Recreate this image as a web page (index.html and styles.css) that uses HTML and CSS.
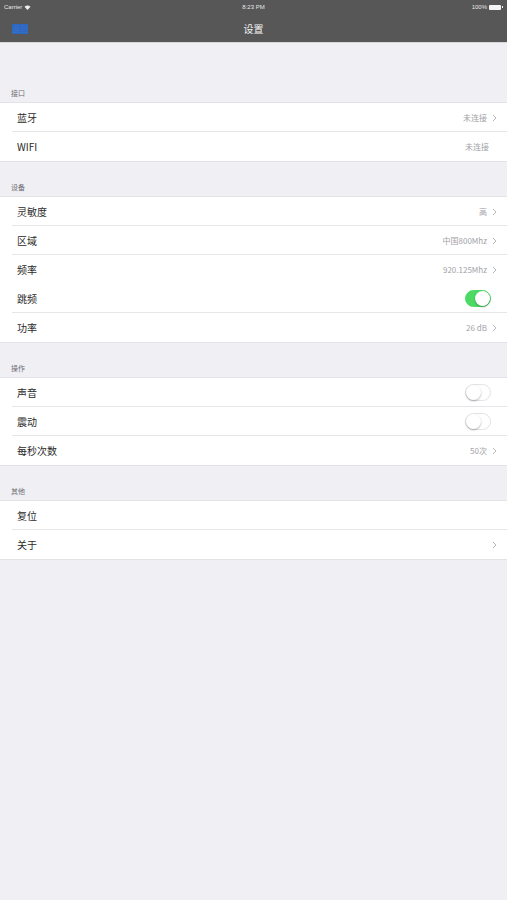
FILE: index.html
```html
<!DOCTYPE html>
<html lang="zh">
<head>
<meta charset="utf-8">
<title>设置</title>
<link rel="stylesheet" href="styles.css">
</head>
<body>
<div class="topbar">
  <div class="statusbar">
    <div class="sb-left">Carrier
      <svg class="wifi" width="7" height="5" viewBox="0 0 14 10"><path d="M7 10 L1 3.5 A9 9 0 0 1 13 3.5 Z" fill="#eee"/></svg>
    </div>
    <div class="sb-center">8:23 PM</div>
    <div class="sb-right">100% <span class="battery"></span></div>
  </div>
  <div class="navbar">
    <span class="back">返回</span>
    <span class="title">设置</span>
    <span class="nav-spacer"></span>
  </div>
</div>

<main class="content">
  <section class="group first">
    <div class="group-header">接口</div>
    <div class="card">
      <div class="row"><span class="label">蓝牙</span><span class="value">未连接<svg class="chev" viewBox="0 0 5 8"><path d="M1 1 L4 4 L1 7" /></svg></span></div>
      <div class="row"><span class="label">WIFI</span><span class="value plain">未连接</span></div>
    </div>
  </section>

  <section class="group">
    <div class="group-header">设备</div>
    <div class="card">
      <div class="row"><span class="label">灵敏度</span><span class="value">高<svg class="chev" viewBox="0 0 5 8"><path d="M1 1 L4 4 L1 7" /></svg></span></div>
      <div class="row"><span class="label">区域</span><span class="value">中国800Mhz<svg class="chev" viewBox="0 0 5 8"><path d="M1 1 L4 4 L1 7" /></svg></span></div>
      <div class="row nosep"><span class="label">频率</span><span class="value">920.125Mhz<svg class="chev" viewBox="0 0 5 8"><path d="M1 1 L4 4 L1 7" /></svg></span></div>
      <div class="row"><span class="label">跳频</span><span class="switch on"><span class="knob"></span></span></div>
      <div class="row"><span class="label">功率</span><span class="value">26 dB<svg class="chev" viewBox="0 0 5 8"><path d="M1 1 L4 4 L1 7" /></svg></span></div>
    </div>
  </section>

  <section class="group">
    <div class="group-header">操作</div>
    <div class="card">
      <div class="row"><span class="label">声音</span><span class="switch"><span class="knob"></span></span></div>
      <div class="row"><span class="label">震动</span><span class="switch"><span class="knob"></span></span></div>
      <div class="row"><span class="label">每秒次数</span><span class="value">50次<svg class="chev" viewBox="0 0 5 8"><path d="M1 1 L4 4 L1 7" /></svg></span></div>
    </div>
  </section>

  <section class="group">
    <div class="group-header">其他</div>
    <div class="card">
      <div class="row"><span class="label">复位</span></div>
      <div class="row"><span class="label">关于</span><span class="value"><svg class="chev" viewBox="0 0 5 8"><path d="M1 1 L4 4 L1 7" /></svg></span></div>
    </div>
  </section>
</main>
</body>
</html>
```
FILE: styles.css
```css
* { box-sizing: border-box; }
html, body { margin: 0; padding: 0; }
body {
  width: 507px;
  height: 900px;
  background: #efeff4;
  font-family: "Noto Sans CJK SC", "Liberation Sans", sans-serif;
  color: #2a2a2a;
  overflow: hidden;
}
.topbar {
  background: #575757;
  border-bottom: 1px solid #d8d8dc;
  height: 43px;
  display: flex;
  flex-direction: column;
}
.statusbar {
  height: 14px;
  display: flex;
  align-items: center;
  justify-content: space-between;
  padding: 0 4px;
  font-family: "Liberation Sans", sans-serif;
  font-size: 6px;
  color: #e8e8e8;
}
.sb-left, .sb-right { flex: 1; display: flex; align-items: center; gap: 2px; }
.sb-right { justify-content: flex-end; }
.sb-center { flex: 1; text-align: center; }
.wifi { display: block; }
.battery {
  width: 12px;
  height: 5px;
  background: #f4f4f4;
  border-radius: 1px;
  position: relative;
  margin-right: 2px;
}
.battery::after {
  content: "";
  position: absolute;
  right: -2px;
  top: 1.5px;
  width: 1px;
  height: 2px;
  background: #f4f4f4;
}
.navbar {
  flex: 1;
  display: flex;
  align-items: center;
  justify-content: space-between;
  padding: 1px 12px 0;
}
.back {
  width: 16px;
  height: 10px;
  background: #2c66bf;
  color: #3a74cc;
  font-size: 8px;
  line-height: 10px;
  text-align: center;
  overflow: hidden;
  display: block;
}
.nav-spacer { width: 16px; }
.title {
  color: #f2f2f2;
  font-size: 10px;
  line-height: 12px;
}
.content { padding-top: 23px; }
.group-header {
  height: 37px;
  display: flex;
  align-items: flex-end;
  padding: 0 0 6px 11px;
  font-size: 7px;
  line-height: 8px;
  color: #6d6d72;
}
.group:not(.first) .group-header { height: 36px; }
.card {
  background: #fff;
  box-shadow: 0 -1px 0 #e3e3e7, 0 1px 0 #e3e3e7;
}
.row {
  height: 29px;
  display: flex;
  align-items: center;
  justify-content: space-between;
  padding: 0 10px 0 17px;
  position: relative;
}
.row::after {
  content: "";
  position: absolute;
  left: 12px;
  right: 0;
  bottom: 0;
  height: 1px;
  background: #e6e6ea;
}
.row:last-child::after, .row.nosep::after { display: none; }
.label {
  font-size: 10px;
  line-height: 12px;
}
.value {
  display: flex;
  align-items: center;
  gap: 5px;
  font-size: 8px;
  line-height: 10px;
  color: #a2a2a7;
}
.value.plain { margin-right: 8px; }
.chev {
  width: 5px;
  height: 8px;
  fill: none;
  stroke: #b8b8bd;
  stroke-width: 1;
}
.switch {
  width: 26px;
  height: 17px;
  border-radius: 9px;
  background: #fff;
  border: 1px solid #e3e3e7;
  display: flex;
  align-items: center;
  justify-content: flex-start;
  padding: 0;
  margin-right: 6px;
}
.switch.on {
  background: #4cd964;
  border-color: #4cd964;
  justify-content: flex-end;
}
.knob {
  width: 15px;
  height: 15px;
  border-radius: 50%;
  background: #fff;
  box-shadow: 0 1px 2px rgba(0,0,0,0.3);
}
```
